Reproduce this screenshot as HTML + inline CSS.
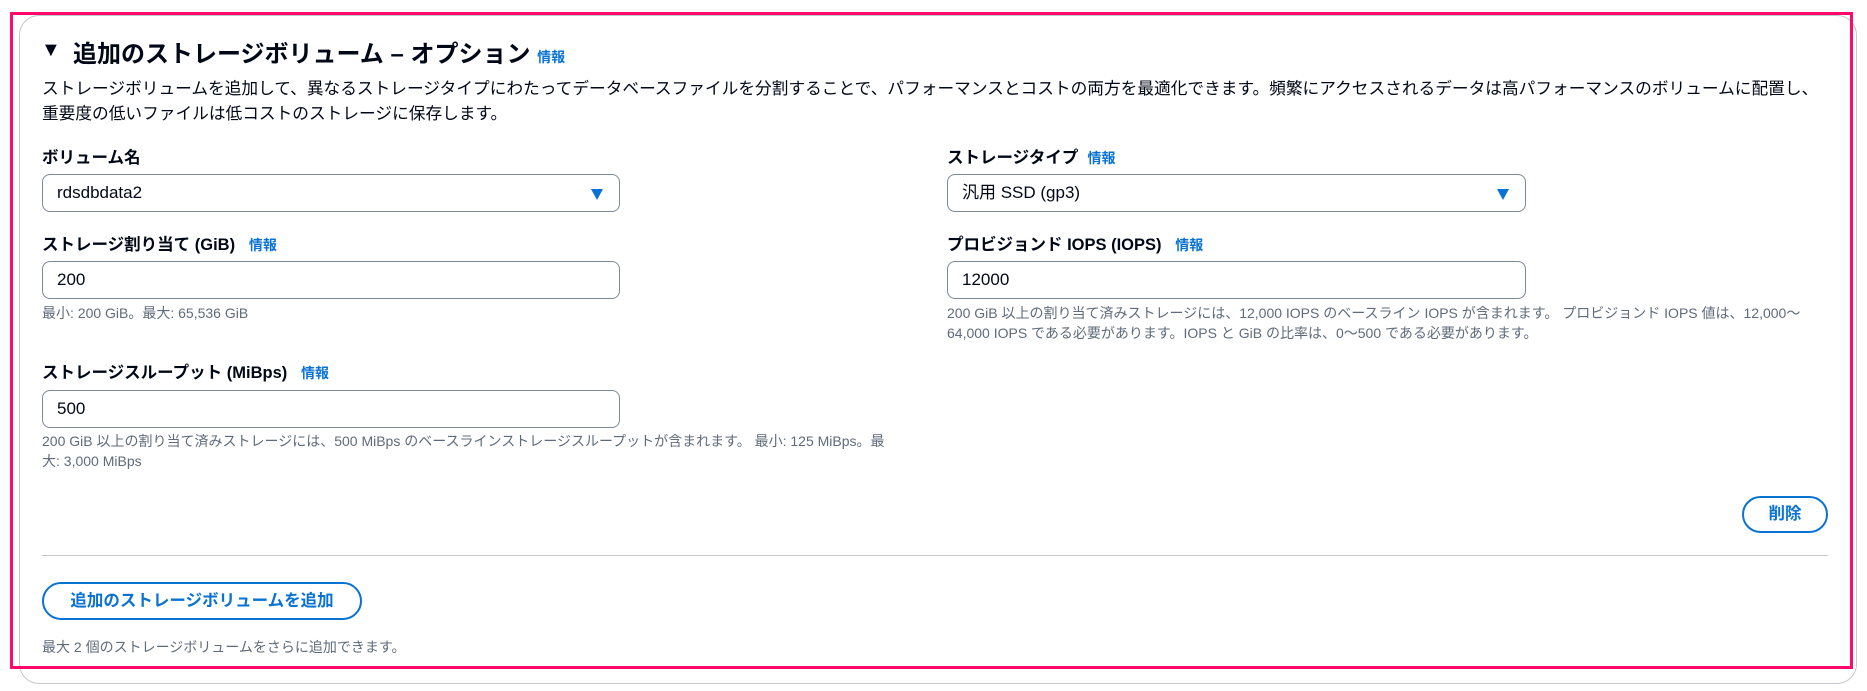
<!DOCTYPE html>
<html><head><meta charset="utf-8"><style>
*{box-sizing:border-box;margin:0;padding:0}
body{width:1867px;height:691px;background:#fff;font-family:"Liberation Sans","Noto Sans CJK JP",sans-serif;color:#000716;position:relative;overflow:hidden}
.card{position:absolute;left:19px;top:15px;width:1838px;height:669px;border:1px solid #c6c6cd;border-radius:20px}
.pink{position:absolute;left:10px;top:12px;width:1843px;height:657px;border:3px solid #ff0a6c}
.a{position:absolute;white-space:nowrap}
.title{font-size:24px;font-weight:bold;top:34px;left:73px}
.tri{left:41px;top:39px;font-size:20px}
.info{color:#0972d3;font-weight:bold;font-size:14px}
.desc{font-size:16.7px;left:42px;line-height:25px;top:76px}
.lbl{font-size:16.5px;font-weight:bold}
.box{position:absolute;border:1px solid #7d8998;border-radius:8px;height:38px;font-size:17px;padding-left:14px;line-height:36px}
.arr{position:absolute;right:16px;top:14px;width:0;height:0;border-left:6.5px solid transparent;border-right:6.5px solid transparent;border-top:11px solid #0972d3}
.hint{font-size:14px;color:#5f6b7a;line-height:20px}
.btn{position:absolute;border:2px solid #0972d3;border-radius:20px;color:#0972d3;font-weight:bold;font-size:16.5px;text-align:center}
</style></head><body>
<div class="card"></div>
<div class="pink"></div>
<div class="a tri">▼</div>
<div class="a title">追加のストレージボリューム – オプション <span class="info">情報</span></div>
<div class="a desc">ストレージボリュームを追加して、異なるストレージタイプにわたってデータベースファイルを分割することで、パフォーマンスとコストの両方を最適化できます。頻繁にアクセスされるデータは高パフォーマンスのボリュームに配置し、<br>重要度の低いファイルは低コストのストレージに保存します。</div>

<div class="a lbl" style="left:42px;top:144px">ボリューム名</div>
<div class="box" style="left:42px;top:174px;width:578px">rdsdbdata2<div class="arr"></div></div>
<div class="a lbl" style="left:947px;top:144px">ストレージタイプ &nbsp;<span class="info">情報</span></div>
<div class="box" style="left:947px;top:174px;width:579px">汎用 SSD (gp3)<div class="arr"></div></div>

<div class="a lbl" style="left:42px;top:231px">ストレージ割り当て (GiB) &nbsp;&nbsp;<span class="info">情報</span></div>
<div class="box" style="left:42px;top:261px;width:578px">200</div>
<div class="a hint" style="left:42px;top:303px">最小: 200 GiB。最大: 65,536 GiB</div>

<div class="a lbl" style="left:947px;top:231px">プロビジョンド IOPS (IOPS) &nbsp;&nbsp;<span class="info">情報</span></div>
<div class="box" style="left:947px;top:261px;width:579px">12000</div>
<div class="a hint" style="left:947px;top:303px">200 GiB 以上の割り当て済みストレージには、12,000 IOPS のベースライン IOPS が含まれます。 プロビジョンド IOPS 値は、12,000～<br>64,000 IOPS である必要があります。IOPS と GiB の比率は、0～500 である必要があります。</div>

<div class="a lbl" style="left:42px;top:359px">ストレージスループット (MiBps) &nbsp;&nbsp;<span class="info">情報</span></div>
<div class="box" style="left:42px;top:390px;width:578px">500</div>
<div class="a hint" style="left:42px;top:431px">200 GiB 以上の割り当て済みストレージには、500 MiBps のベースラインストレージスループットが含まれます。 最小: 125 MiBps。最<br>大: 3,000 MiBps</div>

<div class="btn" style="left:1742px;top:496px;width:86px;height:37px;line-height:33px">削除</div>
<div style="position:absolute;left:42px;top:555px;width:1786px;height:1px;background:#c6c6cd"></div>
<div class="btn" style="left:42px;top:582px;width:320px;height:38px;line-height:34px">追加のストレージボリュームを追加</div>
<div class="a hint" style="left:42px;top:637px">最大 2 個のストレージボリュームをさらに追加できます。</div>
</body></html>
